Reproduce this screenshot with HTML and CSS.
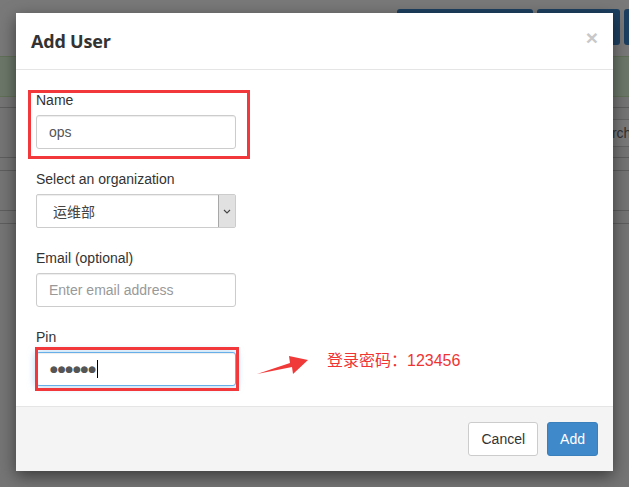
FILE: index.html
```html
<!DOCTYPE html>
<html>
<head>
<meta charset="utf-8">
<title>Add User</title>
<link rel="stylesheet" href="styles.css">
</head>
<body>
<div class="page">
  <div class="topbar">
    <span class="tbtn tb1"></span>
    <span class="tbtn tb2"></span>
    <span class="tbtn tb3"></span>
  </div>
  <div class="alert"></div>
  <div class="strip"></div>
  <div class="toolbar"><div class="search">Search</div></div>
  <div class="row r1"></div>
  <div class="row r2"></div>
  <div class="row r3"></div>
</div>
<div class="backdrop"></div>

<div class="modal">
  <div class="modal-header">
    <h4 class="modal-title">Add User</h4>
    <span class="close">×</span>
  </div>
  <div class="modal-body">
    <div class="group mark-name">
      <label class="lbl">Name</label>
      <input class="control" type="text" value="ops">
    </div>
    <div class="group">
      <label class="lbl">Select an organization</label>
      <div class="select-wrap">
        <select class="control select"><option>运维部</option></select>
        <span class="select-arrow"><svg width="8" height="5" viewBox="0 0 8 5"><path d="M1 1 L4 4 L7 1" fill="none" stroke="#444" stroke-width="1.1"/></svg></span>
      </div>
    </div>
    <div class="group">
      <label class="lbl">Email (optional)</label>
      <input class="control" type="text" placeholder="Enter email address">
    </div>
    <div class="group mark-pin">
      <label class="lbl">Pin</label>
      <div class="control focus pin"><span class="dots">●●●●●●</span><span class="caret"></span></div>
    </div>
  </div>
  <div class="modal-footer">
    <button class="btn">Cancel</button>
    <button class="btn primary">Add</button>
  </div>
</div>

<div class="note">
  <svg class="arrow" width="60" height="28" viewBox="0 0 60 28"><polygon points="7,23 40,12 39,5 58,9 43,23 42,16" fill="#f03a3a"/></svg>
  <span class="note-text">登录密码：123456</span>
</div>
</body>
</html>
```

FILE: styles.css
```css
html, body {
  margin: 0;
  padding: 0;
  width: 629px;
  height: 487px;
  overflow: hidden;
  background: #eaeaea;
  font-family: "Liberation Sans", Arial, sans-serif;
}

.page {
  width: 629px;
  height: 487px;
  background: #eaeaea;
  overflow: hidden;
}

.topbar {
  height: 56px;
  box-sizing: border-box;
  padding: 9px 0 0 397px;
  display: flex;
  gap: 4px;
  background: #f2f2f2;
}
.tbtn {
  display: block;
  height: 36px;
  background: #3a80c2;
  border-radius: 3px;
  flex: none;
}
.tb1 { width: 136px; }
.tb2 { width: 83px; }
.tb3 { width: 30px; }

.alert {
  height: 39px;
  background: #d8eed2;
  border-top: 1px solid #c3e0b0;
  border-bottom: 1px solid #c3e0b0;
}
.strip {
  height: 10px;
  border-bottom: 1px solid #bdbdbd;
}
.toolbar {
  height: 49px;
  border-bottom: 1px solid #bdbdbd;
  display: flex;
  justify-content: flex-end;
  align-items: center;
}
.search {
  width: 60px;
  height: 28px;
  box-sizing: border-box;
  border: 1px solid #c8c8c8;
  background: #f4f4f4;
  color: #666;
  font-size: 14px;
  line-height: 26px;
  padding-left: 0;
  margin-right: -17px;
  white-space: nowrap;
  overflow: hidden;
}
.row { border-bottom: 1px solid #bdbdbd; }
.r1 { height: 12px; }
.r2 { height: 39px; }
.r3 { height: 12px; }

.backdrop {
  position: absolute;
  inset: 0;
  background: rgba(0, 0, 0, 0.5);
}

.modal {
  position: absolute;
  left: 16px;
  top: 13px;
  width: 597px;
  background: #fff;
  box-shadow: 0 5px 15px rgba(0, 0, 0, 0.5);
}

.modal-header {
  height: 57px;
  box-sizing: border-box;
  padding: 0 15px 0 15px;
  border-bottom: 1px solid #e5e5e5;
  display: flex;
  align-items: center;
  justify-content: space-between;
}
.modal-title {
  margin: 0;
  font-family: "Open Sans", "Liberation Sans", sans-serif;
  font-weight: 700;
  font-size: 18px;
  color: #333;
  letter-spacing: -0.2px;
}
.close {
  font-family: "Liberation Sans", Arial, sans-serif;
  font-size: 21px;
  font-weight: 700;
  color: #c8c8c8;
  line-height: 1;
  margin-top: -8px;
  margin-right: 0;
}

.modal-body {
  padding: 20px 20px 20px 20px;
}
.group {
  position: relative;
  width: 200px;
  margin-bottom: 20px;
}
.group:last-child { margin-bottom: 0; }

.mark-name::before,
.mark-pin::before {
  content: "";
  position: absolute;
  border: 3px solid #f2383a;
  pointer-events: none;
  z-index: 2;
}
.mark-name::before {
  left: -8px;
  right: -14px;
  top: 0;
  bottom: -10px;
}
.mark-pin::before {
  left: -1px;
  right: -3px;
  top: 20px;
  bottom: -5px;
}

.lbl {
  display: block;
  font-size: 14px;
  line-height: 20px;
  color: #333;
  margin-bottom: 5px;
}

.control {
  display: block;
  width: 200px;
  height: 34px;
  box-sizing: border-box;
  margin: 0;
  padding: 6px 12px;
  border: 1px solid #ccc;
  border-radius: 3px;
  background: #fff;
  font-family: "Liberation Sans", Arial, sans-serif;
  font-size: 14px;
  line-height: 20px;
  color: #555;
  box-shadow: inset 0 1px 1px rgba(0, 0, 0, 0.075);
  outline: none;
}
.control::placeholder { color: #999; }

.select-wrap { position: relative; }
.select {
  appearance: none;
  -webkit-appearance: none;
  padding-left: 16px;
  border-radius: 2px;
  font-family: "Noto Sans CJK SC", "Liberation Sans", sans-serif;
  color: #444;
}
.select-arrow {
  position: absolute;
  right: 1px;
  top: 1px;
  width: 16px;
  height: 32px;
  background: #e1e1e1;
  border-left: 1px solid #a8a8a8;
  display: flex;
  align-items: center;
  justify-content: center;
}

.focus {
  border-color: #66afe9;
  box-shadow: inset 0 1px 1px rgba(0, 0, 0, 0.075), 0 0 8px rgba(102, 175, 233, 0.6);
}
.pin {
  display: flex;
  align-items: center;
  padding-left: 13px;
}
.dots {
  font-family: "DejaVu Sans", sans-serif;
  font-size: 9px;
  letter-spacing: -0.2px;
  color: #555;
}
.caret {
  display: inline-block;
  width: 1px;
  height: 18px;
  background: #000;
  margin-left: 1px;
}

.modal-footer {
  background: #f4f4f4;
  border-top: 1px solid #e5e5e5;
  padding: 15px;
  display: flex;
  justify-content: flex-end;
  gap: 9px;
}
.btn {
  height: 34px;
  box-sizing: border-box;
  padding: 6px 12px;
  font-family: "Liberation Sans", Arial, sans-serif;
  font-size: 14px;
  line-height: 20px;
  border: 1px solid #ccc;
  border-radius: 3px;
  background: #fff;
  color: #333;
}
.primary {
  background: #3f89ca;
  border-color: #3a80bd;
  color: #fff;
}

.note {
  position: absolute;
  left: 250px;
  top: 341px;
  display: flex;
  align-items: center;
}
.arrow { display: block; margin-top: 10px; }
.note-text {
  margin-left: 17px;
  margin-top: -2px;
  font-family: "Liberation Sans", "Noto Sans CJK SC", sans-serif;
  font-size: 16px;
  font-weight: 400;
  color: #f03434;
  white-space: nowrap;
}
```
